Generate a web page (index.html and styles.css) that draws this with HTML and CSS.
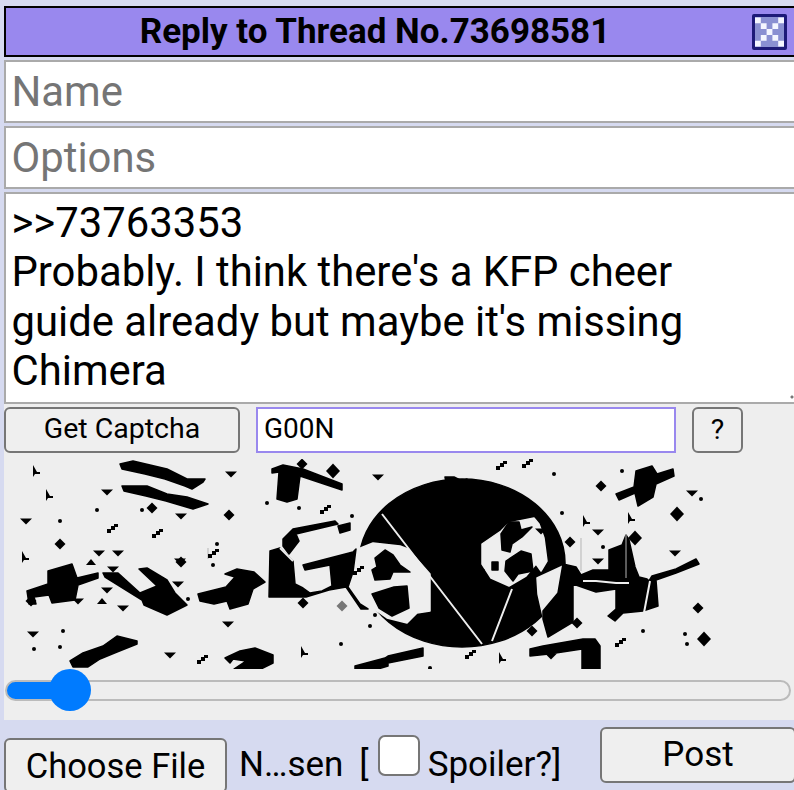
FILE: index.html
```html
<!DOCTYPE html>
<html lang="en">
<head>
<meta charset="utf-8">
<title>Reply to Thread</title>
<link rel="stylesheet" href="styles.css">
</head>
<body>
<form class="reply">
  <header class="reply-head">
    <h1 class="reply-title">Reply to Thread No.73698581</h1>
    <button class="close" type="button" aria-label="Close">
      <svg viewBox="0 0 5 5" width="30" height="30" aria-hidden="true">
        <path class="close-x" d="M0 0h1v1H0zM4 0h1v1H4zM1 1h1v1H1zM3 1h1v1H3zM2 2h1v1H2zM1 3h1v1H1zM3 3h1v1H3zM0 4h1v1H0zM4 4h1v1H4z"/>
      </svg>
    </button>
  </header>
  <input class="field" type="text" placeholder="Name">
  <input class="field" type="text" placeholder="Options">
  <textarea class="field comment">&gt;&gt;73763353
Probably. I think there's a KFP cheer guide already but maybe it's missing Chimera</textarea>
  <section class="captcha">
    <div class="captcha-row">
      <button class="btn btn-get" type="button">Get Captcha</button>
      <input class="captcha-input" type="text" value="G00N">
      <button class="btn btn-help" type="button">?</button>
    </div>
    <svg class="captcha-img" viewBox="4 458 788 210" width="788" height="210" aria-hidden="true">
      <defs>
        <path id="d" d="M-6 -2.500h12l-6 6z"/>
        <path id="u" d="M-5 3h10l-5-6z"/>
        <path id="r" d="M-3-6v12l2-3h5v-2h-3z"/>
        <path id="m" d="M0-5.500l5.500 5.500-5.500 5.500-5.500-5.500z"/>
        <path id="M" d="M0-7.500l7 7.500-7 7.500-7-7.500z"/>
        <path id="s" d="M-5 0h4v-3h3v-2h4v3h-3v3h-4v3h-4z"/>
        <circle id="o" r="2"/>
      </defs>
      <g class="ink">
      <!-- streaks, upper left -->
      <path d="M120 463l13-3 34 8 20 10h18l-2 3-11 7-7-3-20-7-20-5-23-5zM122 485h25l20 8 20 3 21 7-15 5-27-8-20-5-22-5z"/>
      <path d="M272 468l11-4 20 4 39 15v6l-42-14-3 23-10 3-10-3 2-27-7 1z"/>
      <!-- wing, upper right -->
      <path d="M616 493l18-7 2-16 16-5 5 8 16-5 1 7-18 8-3 13-15 9-3-13-16 7z"/>
      <!-- main disc -->
      <ellipse cx="462" cy="562" rx="103" ry="84"/>
      <path d="M446 481l-1-5h9l8 4 5-2-3 5z"/>
      <!-- white interiors of the disc -->
      <path class="w" d="M345 548l13 0 15-6 27 3 8 3 22 25v37l-13 2-10 10-20-5-20-14-10-20-12-35z"/>
      <path class="w" d="M482 543l19-13 8-8 25-5 5 6 5 14 3 23-6 10-5-7-10 12-17 10-18-8-9-14z"/>
      <path class="w" d="M537 577l26-12-5 25-15 25-5-22z"/>
      <!-- blobs in the white interiors -->
      <path d="M375 557l10-8 8 5 7 10 10 7-17 0-3 7-15 1-3-10 5-3zM372 593l22-7 13-1 2 22-17 8-13-8z"/>
      <path d="M501 533l8-12 10 0 2 8 11-3-10 10-10 7-2 8-8-2zM506 560l15-10 10 3 2 17-15 3-5 7-8-10z"/>
      <path d="M481 568l-16-1 3 2h16zM492 565v-4h6v8h-6z"/>
      <!-- rocket left of disc -->
      <path d="M270 550l10-3 13 13 2 23 8 4 7 5 12-2 10-5-2-21-25 5-2-5 50-13 3-3-3 23-5 15 12 17 8 5h-7l-15-22-17 3-23 7h-14l-23 0z"/>
      <path class="wl" d="M280 547l13 13"/>
      <path d="M283 538l10-10 42-8 3 3-42 10 3 7-10 13-6-8zM338 525l12-3v7l-10 3z"/>
      <!-- wings, left -->
      <path d="M27 590l21-7v-13l24-7 5 14 21-5v5l-20 7-3 15-23 3-3-8-15 2 2 7h-7z"/>
      <path d="M103 572h15l22 20 17-7-18-17 8-1 20 12 8 13 12 12-20 10-23-10-2-5-37-23z"/>
      <path d="M198 593l28-7 9-10-10-3 12-5 17 3 11 10-12 7-5 15-18 5-3-8-13 3-14-3z"/>
      <path d="M70 660l13-8 20-7 14-10 20 5v3l-20 8-17 7-12 8H73z"/>
      <path d="M225 657l15-7 15-3 18 7v8l-12 6h-27l12-8-13-2-3 4z"/>
      <path d="M355 665l30-8 3-2 35-8v8l-35 7v3l-10 3h-23z"/>
      <!-- wing, right of disc -->
      <path d="M563 563l13 3 5 8 12-5h16v-20l13-5 4-10 3 5 6 27 4 10 8 2 2 2 3-5 24-7 20-10 3 5-23 9-20 7 2 26-15 5-20 2-8 8-7-5 8-7v-20l-20 3-23-8v38l-25 15-5-18 0-8 15-18z"/>
      <path class="wl" d="M583 580h13l20 2h13M650 580l-7 37"/>
      <path class="thin" d="M581 537v33M626 533v44M208 547v11"/>
      <path d="M530 648l13-3 40-7h12l5 7v23h-18v-20l-33 5-19 2z"/>
      <path class="wl" d="M382 513l100 130M512 588l-20 52"/>
      </g>
      <!-- scattered specks -->
      <use href="#d" x="231" y="473"/><use href="#d" x="107" y="491"/><use href="#d" x="26" y="520"/><use href="#d" x="181" y="515"/>
      <use href="#d" x="99" y="552"/><use href="#d" x="118" y="552"/><use href="#d" x="113" y="568"/><use href="#d" x="180" y="560"/>
      <use href="#d" x="378" y="476"/><use href="#d" x="692" y="492"/><use href="#d" x="598" y="531"/><use href="#d" x="598" y="560"/>
      <use href="#d" x="675" y="552"/><use href="#d" x="178" y="583"/><use href="#d" x="107" y="589"/><use href="#d" x="33" y="633"/>
      <use href="#d" x="170" y="654"/><use href="#d" x="228" y="623"/><use href="#d" x="123" y="607"/><use href="#d" x="78" y="600"/>
      <use href="#d" x="551" y="655"/><use href="#d" x="541" y="530"/>
      <use href="#u" x="91" y="561"/><use href="#u" x="102" y="600"/>
      <use href="#r" x="36" y="470"/><use href="#r" x="49" y="494"/><use href="#r" x="25" y="556"/><use href="#r" x="586" y="520"/>
      <use href="#r" x="631" y="517"/><use href="#r" x="502" y="657"/><use href="#r" x="304" y="651"/>
      <use href="#m" x="60" y="543"/><use href="#m" x="302" y="463"/><use href="#M" x="333" y="470"/><use href="#m" x="152" y="507"/>
      <use href="#m" x="229" y="514"/><use href="#m" x="601" y="485"/><use href="#M" x="677" y="513"/><use href="#m" x="570" y="541"/>
      <use href="#M" x="635" y="537"/><use href="#m" x="698" y="607"/><use href="#M" x="704" y="638"/><use href="#m" x="532" y="630"/>
      <use href="#m" x="577" y="622"/><use href="#m" x="31" y="600"/><use href="#m" x="303" y="602"/><use href="#m" x="181" y="561"/>
      <use href="#m" x="342" y="605" class="hollow"/>
      <use href="#s" x="157" y="533"/><use href="#s" x="325" y="509"/><use href="#s" x="620" y="642"/><use href="#s" x="470" y="654"/>
      <use href="#s" x="202" y="659"/><use href="#s" x="501" y="465"/><use href="#s" x="527" y="463"/><use href="#s" x="213" y="553"/>
      <use href="#s" x="112" y="528"/><use href="#s" x="488" y="603"/><use href="#s" x="358" y="570"/>
      <use href="#o" x="97" y="509"/><use href="#o" x="60" y="520"/><use href="#o" x="142" y="509"/><use href="#o" x="267" y="502"/>
      <use href="#o" x="299" y="507"/><use href="#o" x="352" y="515"/><use href="#o" x="217" y="543"/><use href="#o" x="554" y="473"/>
      <use href="#o" x="622" y="470"/><use href="#o" x="701" y="498"/><use href="#o" x="562" y="512"/><use href="#o" x="603" y="546"/>
      <use href="#o" x="685" y="633"/><use href="#o" x="687" y="643"/><use href="#o" x="643" y="630"/><use href="#o" x="430" y="667"/>
      <use href="#o" x="63" y="630"/><use href="#o" x="60" y="646"/><use href="#o" x="34" y="648"/><use href="#o" x="188" y="598"/>
      <use href="#o" x="341" y="643"/><use href="#o" x="370" y="625"/><use href="#o" x="375" y="614"/><use href="#o" x="213" y="564"/>
    </svg>
    <input class="slider" type="range" min="0" max="1000" value="57" aria-label="Captcha offset">
  </section>
  <div class="file-row">
    <button class="btn btn-file" type="button">Choose File</button>
    <span class="file-name">N…sen</span>
    <label class="spoiler"><span class="bracket">[</span><input class="check" type="checkbox"><span class="spoiler-text">Spoiler?]</span></label>
    <button class="btn btn-post" type="button">Post</button>
  </div>
</form>
</body>
</html>
```
FILE: styles.css
```css
* {
  box-sizing: border-box;
}

html,
body {
  margin: 0;
  height: 790px;
  overflow: hidden;
  background: #d6daf0;
}

body {
  font-family: Roboto, "Noto Sans", sans-serif;
  color: #000;
}

.reply {
  display: flex;
  flex-direction: column;
  width: 792px;
  margin-left: 4px;
  padding-top: 6px;
}

.reply-head {
  display: flex;
  align-items: center;
  height: 51px;
  margin-bottom: 3px;
  padding-right: 9px;
  background: #9988ee;
  border: 2px solid #000;
  border-right: 0;
}

.reply-title {
  flex: 1;
  margin: 0;
  font-size: 35px;
  font-weight: 700;
  line-height: 47px;
  text-align: center;
}

.close {
  display: flex;
  align-items: center;
  justify-content: center;
  width: 35px;
  height: 36px;
  margin-left: 8px;
  padding: 0;
  background: #8a90d2;
  border: 3px solid #1d1a78;
  border-radius: 2px;
}

.close-x {
  fill: #f4f6ff;
}

.field {
  display: block;
  width: 100%;
  height: 63px;
  margin-bottom: 3px;
  padding: 0 5.500px;
  font-family: Roboto, sans-serif;
  font-size: 41.800px;
  color: #000;
  background: #fff;
  border: 2px solid #aaa;
  border-radius: 0;
  outline: 0;
}

.field::placeholder {
  color: #757575;
}

.comment {
  height: 212px;
  margin-bottom: 0;
  padding: 3.500px 20px 0 5.500px;
  line-height: 49.500px;
  overflow: hidden;
  resize: none;
  background: radial-gradient(circle at calc(100% - 2px) calc(100% - 5px), #777 1px, transparent 2px), #fff;
}

.captcha {
  display: flex;
  flex-direction: column;
  height: 316px;
  background: #eee;
}

.captcha-row {
  display: flex;
  align-items: flex-start;
  height: 55px;
  padding-top: 3px;
}

.btn {
  font-family: Roboto, sans-serif;
  color: #000;
  background: #efefef;
  border: 2px solid #767676;
  border-radius: 6px;
  padding: 0;
}

.btn-get {
  width: 236px;
  height: 46px;
  padding-bottom: 3px;
  font-size: 28.500px;
}

.captcha-input {
  width: 420px;
  height: 46px;
  margin-left: 16px;
  padding: 0 6px 3px;
  font-family: Roboto, sans-serif;
  font-size: 28px;
  background: #fff;
  border: 2px solid #9988ee;
  outline: 0;
}

.btn-help {
  width: 51px;
  height: 46px;
  margin-left: 16px;
  padding-bottom: 2px;
  font-size: 28.500px;
}

.captcha-img {
  display: block;
  flex: none;
}

.ink {
  stroke: #000;
  stroke-width: 1.500;
  stroke-linejoin: round;
}

.captcha-img .w {
  fill: #eee;
  stroke: #eee;
}

.captcha-img .wl {
  fill: none;
  stroke: #eee;
  stroke-width: 2;
}

.captcha-img .thin {
  fill: none;
  stroke: #b5b5b5;
  stroke-width: 1;
}

.captcha-img .hollow {
  fill: #777;
}

.slider {
  -webkit-appearance: none;
  appearance: none;
  display: block;
  width: 786px;
  height: 42px;
  margin: 0 0 0 1px;
  padding: 0;
  background: transparent;
}

.slider::-webkit-slider-runnable-track {
  height: 21px;
  background: linear-gradient(90deg, #007bff 65px, #eee 65px);
  border: 2px solid #bbb;
  border-radius: 11px;
}

.slider::-webkit-slider-thumb {
  -webkit-appearance: none;
  appearance: none;
  width: 42px;
  height: 42px;
  margin-top: -12.500px;
  background: #007bff;
  border-radius: 50%;
}

.file-row {
  display: flex;
  align-items: flex-start;
  font-size: 35px;
}

.btn-file {
  width: 223px;
  height: 55px;
  margin-top: 18px;
  font-size: 34.500px;
}

.file-name {
  margin-top: 25px;
  margin-left: 12px;
  line-height: 40px;
}

.spoiler {
  display: flex;
  align-items: flex-start;
  margin-left: 16px;
}

.bracket {
  margin-top: 25px;
  line-height: 40px;
}

.check {
  -webkit-appearance: none;
  appearance: none;
  width: 42px;
  height: 41px;
  margin: 15px 0 0 9px;
  background: #fff;
  border: 2px solid #767676;
  border-radius: 7px;
}

.spoiler-text {
  margin-top: 25px;
  margin-left: 8px;
  line-height: 40px;
}

.btn-post {
  width: 196px;
  height: 56px;
  margin-top: 7px;
  margin-left: auto;
  padding-bottom: 2px;
  font-size: 35px;
}
```
